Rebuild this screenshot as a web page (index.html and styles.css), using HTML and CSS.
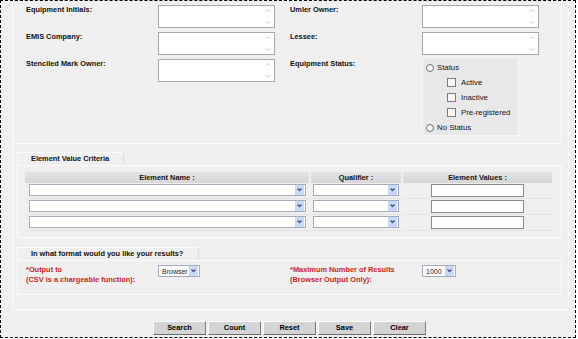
FILE: index.html
```html
<!DOCTYPE html>
<html lang="en">
<head>
    <meta charset="UTF-8">
    <title>Equipment Search</title>
    <link rel="stylesheet" href="styles.css">
</head>
<body>
    <div class="frame">
        <div class="panel">
            <div class="search-fields">
                <div class="field-label">Equipment Initials:</div>
                <div class="memo"><svg width="8" height="21" viewBox="0 0 8 21"><path d="M1.5 6 L4 3.5 L6.5 6 M1.5 15 L4 17.5 L6.5 15" fill="none" stroke="#cdcdcd" stroke-width="1"/></svg></div>
                <div class="field-label">Umler Owner:</div>
                <div class="memo"><svg width="8" height="21" viewBox="0 0 8 21"><path d="M1.5 6 L4 3.5 L6.5 6 M1.5 15 L4 17.5 L6.5 15" fill="none" stroke="#cdcdcd" stroke-width="1"/></svg></div>

                <div class="field-label">EMIS Company:</div>
                <div class="memo"><svg width="8" height="21" viewBox="0 0 8 21"><path d="M1.5 6 L4 3.5 L6.5 6 M1.5 15 L4 17.5 L6.5 15" fill="none" stroke="#cdcdcd" stroke-width="1"/></svg></div>
                <div class="field-label">Lessee:</div>
                <div class="memo"><svg width="8" height="21" viewBox="0 0 8 21"><path d="M1.5 6 L4 3.5 L6.5 6 M1.5 15 L4 17.5 L6.5 15" fill="none" stroke="#cdcdcd" stroke-width="1"/></svg></div>

                <div class="field-label">Stenciled Mark Owner:</div>
                <div class="memo"><svg width="8" height="21" viewBox="0 0 8 21"><path d="M1.5 6 L4 3.5 L6.5 6 M1.5 15 L4 17.5 L6.5 15" fill="none" stroke="#cdcdcd" stroke-width="1"/></svg></div>
                <div class="field-label">Equipment Status:</div>
                <div class="status-box">
                    <div class="opt"><span class="radio"></span>Status</div>
                    <div class="opt sub"><span class="check"></span>Active</div>
                    <div class="opt sub"><span class="check"></span>Inactive</div>
                    <div class="opt sub"><span class="check"></span>Pre-registered</div>
                    <div class="opt"><span class="radio"></span>No Status</div>
                </div>
            </div>

            <div class="group group-criteria">
                <div class="group-tab">Element Value Criteria</div>
                <div class="group-body">
                    <div class="criteria">
                        <div class="th">Element Name :</div>
                        <div class="th">Qualifier :</div>
                        <div class="th">Element Values :</div>

                        <div class="td"><div class="select select-name"><span class="drop"><svg width="9" height="10" viewBox="0 0 9 10"><path d="M2.5 3.5 L4.5 5.5 L6.5 3.5" fill="none" stroke="#42588c" stroke-width="1.4"/></svg></span></div></div>
                        <div class="td"><div class="select select-qual"><span class="drop"><svg width="9" height="10" viewBox="0 0 9 10"><path d="M2.5 3.5 L4.5 5.5 L6.5 3.5" fill="none" stroke="#42588c" stroke-width="1.4"/></svg></span></div></div>
                        <div class="td td-center"><div class="value-box"></div></div>

                        <div class="td"><div class="select select-name"><span class="drop"><svg width="9" height="10" viewBox="0 0 9 10"><path d="M2.5 3.5 L4.5 5.5 L6.5 3.5" fill="none" stroke="#42588c" stroke-width="1.4"/></svg></span></div></div>
                        <div class="td"><div class="select select-qual"><span class="drop"><svg width="9" height="10" viewBox="0 0 9 10"><path d="M2.5 3.5 L4.5 5.5 L6.5 3.5" fill="none" stroke="#42588c" stroke-width="1.4"/></svg></span></div></div>
                        <div class="td td-center"><div class="value-box"></div></div>

                        <div class="td"><div class="select select-name"><span class="drop"><svg width="9" height="10" viewBox="0 0 9 10"><path d="M2.5 3.5 L4.5 5.5 L6.5 3.5" fill="none" stroke="#42588c" stroke-width="1.4"/></svg></span></div></div>
                        <div class="td"><div class="select select-qual"><span class="drop"><svg width="9" height="10" viewBox="0 0 9 10"><path d="M2.5 3.5 L4.5 5.5 L6.5 3.5" fill="none" stroke="#42588c" stroke-width="1.4"/></svg></span></div></div>
                        <div class="td td-center"><div class="value-box"></div></div>
                    </div>
                </div>
            </div>

            <div class="group group-format">
                <div class="group-tab">In what format would you like your results?</div>
                <div class="group-body">
                    <div class="format-fields">
                        <div class="req-label">*Output to<br>(CSV is a chargeable function):</div>
                        <div><div class="select select-small select-browser">Browser<span class="drop"><svg width="9" height="10" viewBox="0 0 9 10"><path d="M2.5 3.5 L4.5 5.5 L6.5 3.5" fill="none" stroke="#42588c" stroke-width="1.4"/></svg></span></div></div>
                        <div class="req-label">*Maximum Number of Results<br>(Browser Output Only):</div>
                        <div><div class="select select-small select-max">1000<span class="drop"><svg width="9" height="10" viewBox="0 0 9 10"><path d="M2.5 3.5 L4.5 5.5 L6.5 3.5" fill="none" stroke="#42588c" stroke-width="1.4"/></svg></span></div></div>
                    </div>
                </div>
            </div>
        </div>

        <div class="actions">
            <button>Search</button>
            <button>Count</button>
            <button>Reset</button>
            <button>Save</button>
            <button>Clear</button>
        </div>
    </div>
</body>
</html>
```

FILE: styles.css
```css
* {
    box-sizing: border-box;
}
body {
    margin: 0;
    background: #fff;
    font-family: "Liberation Sans", Arial, sans-serif;
    font-size: 7.4px;
    color: #111;
}
.frame {
    width: 576px;
    height: 338px;
    border: 1px dashed #000;
    background: #efefef;
    overflow: hidden;
}
.panel {
    margin-left: 11px;
    width: 557px;
    height: 309px;
    border-left: 1px solid #fbfbfb;
    border-right: 1px solid #fbfbfb;
    border-bottom: 1px solid #fbfbfb;
}
.search-fields {
    width: 549px;
    height: 143px;
    padding: 4px 0 0 13px;
    display: grid;
    grid-template-columns: 132px 132px 132px 132px;
    row-gap: 4px;
    align-content: start;
    align-items: start;
    border-right: 1px solid #fbfbfb;
    border-bottom: 1px solid #fbfbfb;
}
.field-label {
    font-weight: bold;
    line-height: 9px;
}
.memo {
    width: 117px;
    height: 23px;
    border: 1px solid #a9a9a9;
    background: #fff;
    display: flex;
    justify-content: flex-end;
    padding: 0 2px 0 0;
}
.status-box {
    margin-top: -2px;
    width: 97px;
    height: 79px;
    padding: 2px 0 0 3px;
    background: #e8e8e8;
    border: 1px solid #f6f6f6;
}
.opt {
    height: 15px;
    display: flex;
    align-items: center;
    font-size: 7.8px;
}
.opt.sub {
    padding-left: 21px;
}
.radio {
    width: 8px;
    height: 8px;
    border: 1px solid #707070;
    border-radius: 50%;
    background: #f6f6f6;
    margin-right: 3px;
}
.check {
    width: 9px;
    height: 9px;
    border: 1px solid #7a7a7a;
    background: #f6f6f6;
    margin-right: 5px;
}
.group {
    margin-left: 4px;
    width: 545px;
}
.group-criteria {
    margin-top: 8px;
}
.group-format {
    margin-top: 9px;
}
.group-tab {
    height: 13px;
    padding-left: 13px;
    border: 1px solid #fbfbfb;
    border-bottom: none;
    border-right-color: #dedede;
    font-weight: bold;
    line-height: 12px;
}
.group-criteria .group-tab {
    width: 107px;
}
.group-format .group-tab {
    width: 182px;
}
.group-body {
    border: 1px solid #fbfbfb;
}
.group-criteria .group-body {
    height: 73px;
}
.group-format .group-body {
    height: 35px;
}
.criteria {
    margin: 6px 0 0 7px;
    display: grid;
    grid-template-columns: 284px 90px 149px;
    column-gap: 2px;
}
.th {
    height: 11px;
    line-height: 11px;
    text-align: center;
    font-weight: bold;
    background: linear-gradient(#e4e4e4, #d6d6d6);
}
.td {
    height: 16px;
    padding-top: 1px;
    border-bottom: 1px solid #e3e3e3;
}
.td-center {
    display: flex;
    justify-content: center;
}
.select {
    height: 12px;
    border: 1px solid #a2acbc;
    background: #fff;
    display: flex;
    align-items: center;
    padding-right: 1px;
}
.select-name {
    margin-left: 4px;
    width: 277px;
}
.select-qual {
    margin-left: 2px;
    width: 86px;
}
.drop {
    margin-left: auto;
    width: 9px;
    height: 10px;
    background: #c8d8f6;
    display: flex;
}
.value-box {
    width: 93px;
    height: 13px;
    border: 1px solid #8a8a8a;
    background: #fff;
}
.format-fields {
    padding: 4px 0 0 8px;
    display: grid;
    grid-template-columns: 132px 132px 132px 132px;
    align-items: start;
}
.req-label {
    color: #cc1f1f;
    font-weight: bold;
    line-height: 10px;
}
.select-small {
    font-size: 7px;
    padding-left: 3px;
    color: #222;
}
.select-browser {
    width: 42px;
}
.select-max {
    width: 34px;
}
.actions {
    margin-top: 11px;
    padding-left: 3px;
    display: flex;
    justify-content: center;
    gap: 2px;
}
.actions button {
    width: 53px;
    height: 14px;
    padding: 0;
    background: #d4d4d4;
    border: 1px solid;
    border-color: #fbfbfb #7c7c7c #6c6c6c #fbfbfb;
    font-family: "Liberation Sans", Arial, sans-serif;
    font-size: 7.4px;
    font-weight: bold;
    color: #000;
    line-height: 12px;
}
```
